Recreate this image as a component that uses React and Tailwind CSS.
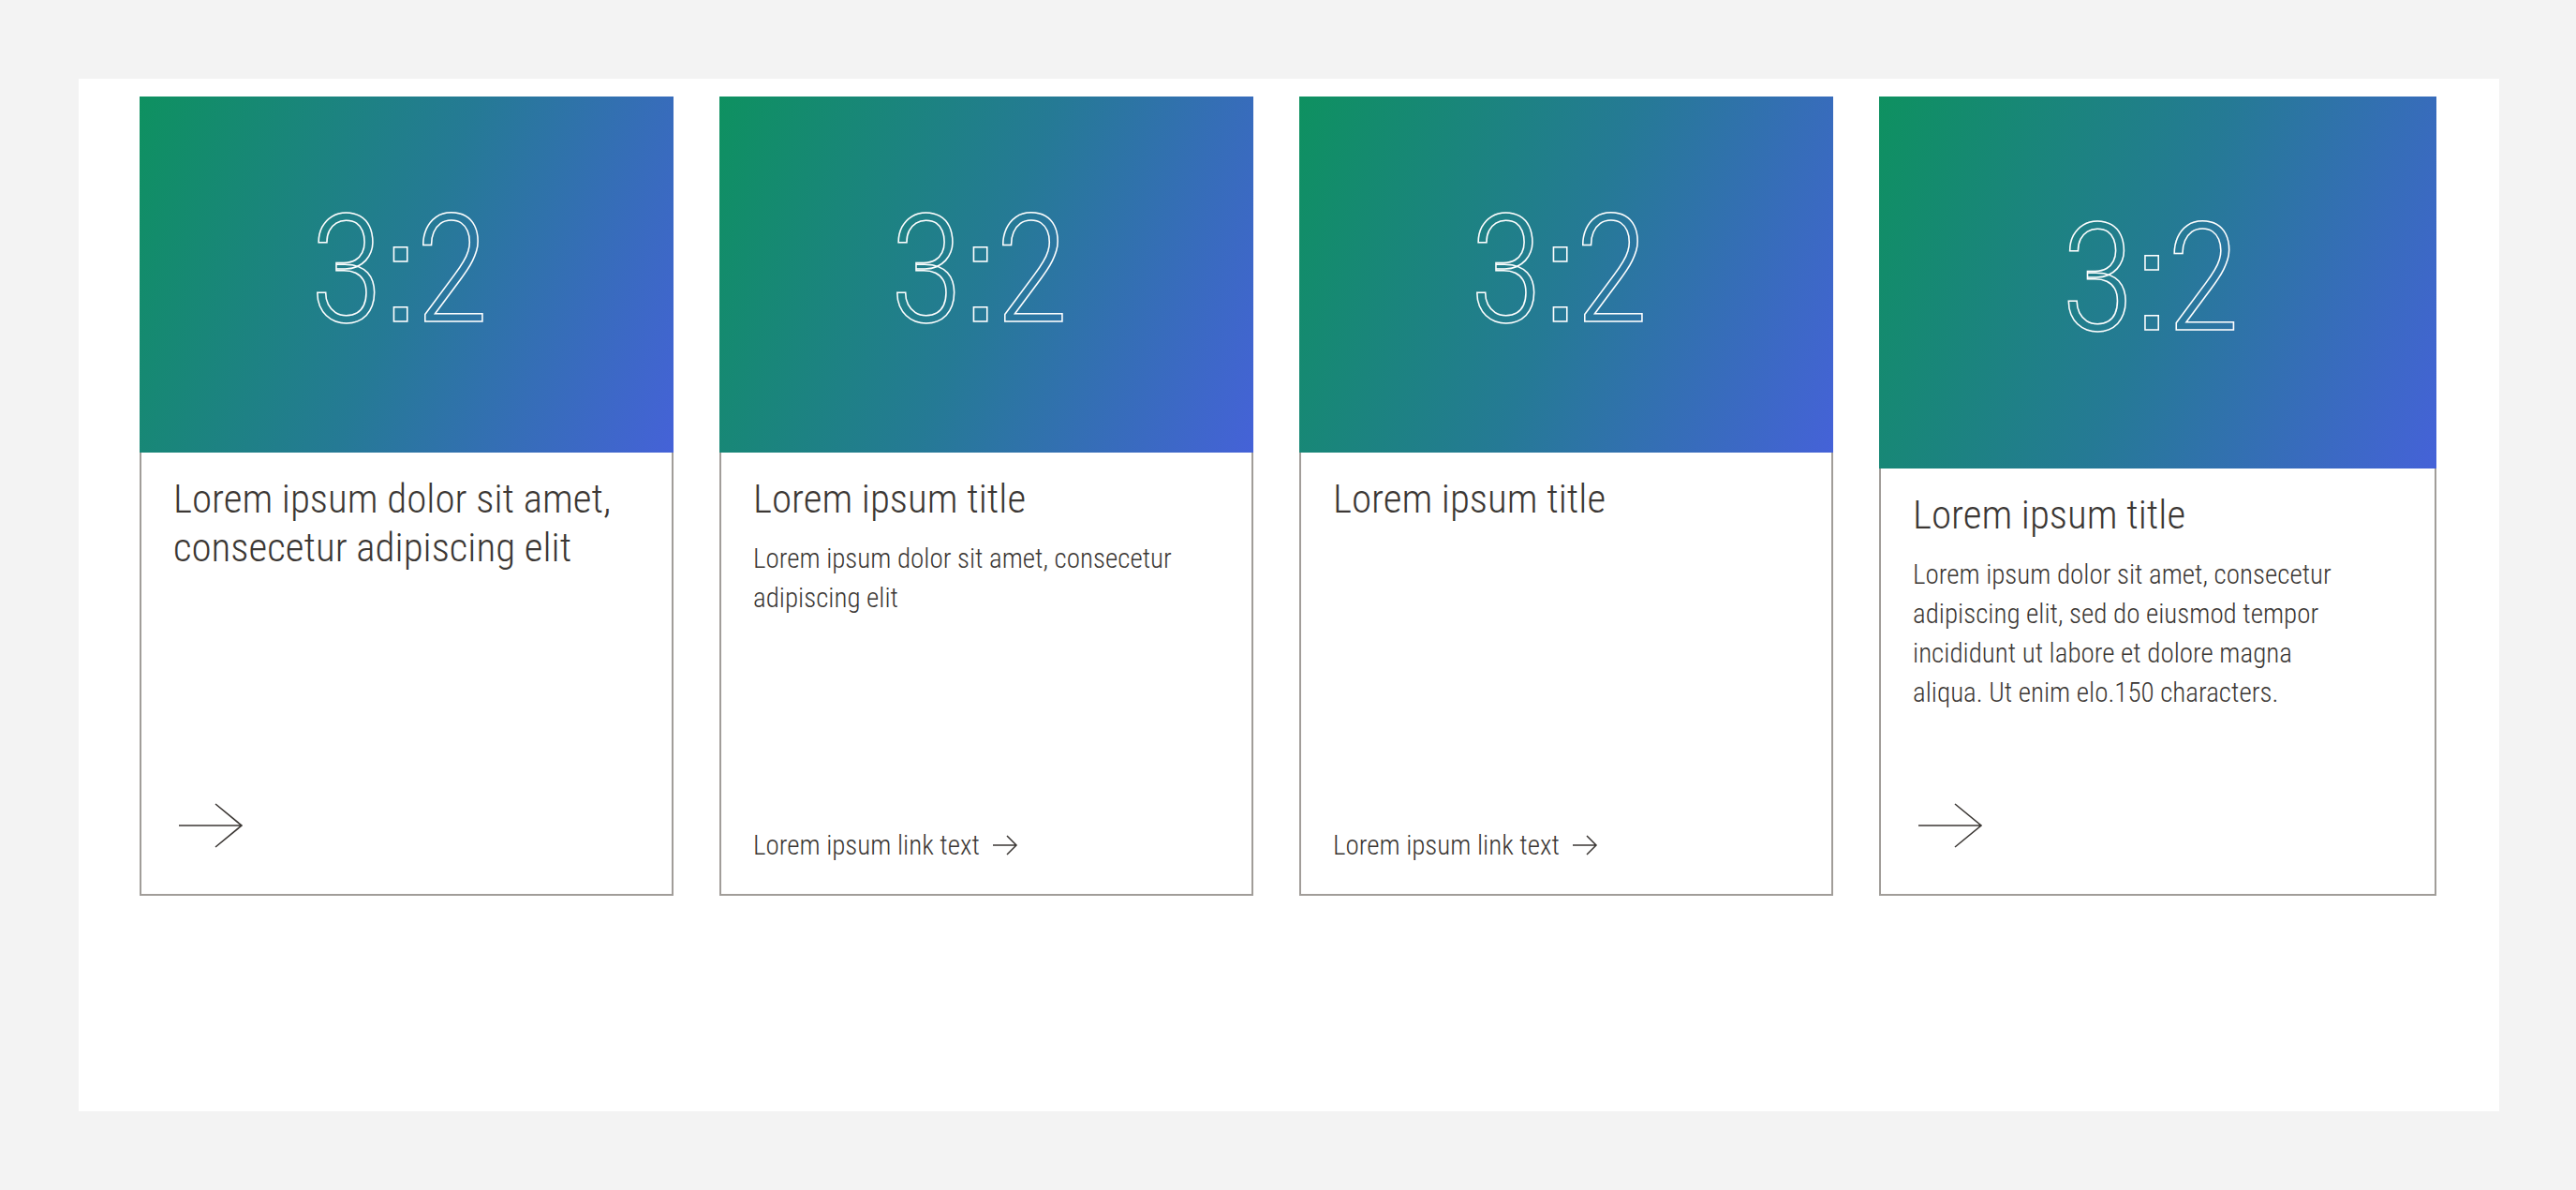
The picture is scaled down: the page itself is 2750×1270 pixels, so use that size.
import React from "react";

const font = "font-['Liberation_Sans_Narrow','Roboto_Condensed','DejaVu_Sans_Condensed','Liberation_Sans',sans-serif]";

const BigArrow = () => (
  <svg width="70" height="48" viewBox="0 0 70 48" fill="none" stroke="#3b3734" strokeWidth="1.6">
    <path d="M1 24 H68 M40 1 L68 24 L40 47" />
  </svg>
);

const SmallArrow = () => (
  <svg width="28" height="22" viewBox="0 0 28 22" fill="none" stroke="#3b3734" strokeWidth="1.5">
    <path d="M1 11 H26 M16 1 L26 11 L16 21" />
  </svg>
);

const Ratio = ({ tall }) => (
  <div
    className={`${tall ? "h-[397px]" : "h-[380px]"} bg-linear-[112deg] from-[#0e9160] via-[#257a95] to-[#4562d8] flex items-center justify-center pr-[22px] pb-[10px]`}
  >
    <span className="text-[162px] leading-none font-light text-transparent [-webkit-text-stroke:1.5px_#ffffff] tracking-[-7px]">
      3<span className="font-['Liberation_Sans',sans-serif] font-normal text-[150px] pl-[4px] pr-[2px]">:</span>2
    </span>
  </div>
);

const Card = ({ wide, title, body, link, arrow }) => (
  <div className={`${wide ? "w-[595px]" : "w-[570px]"} h-[853px] flex flex-col ${font}`}>
    <Ratio tall={wide} />
    <div className="flex-1 flex flex-col border-2 border-t-0 border-[#a19d99] pl-[34px] pr-[30px] pt-[23px] pb-[31px] text-[#3b3734]">
      <h3 className="text-[43px] leading-[52px] font-light">{title}</h3>
      {body && (
        <p className="mt-[17px] text-[29px] leading-[42px] font-[350] max-w-[480px]">{body}</p>
      )}
      <div className="mt-auto">
        {link && (
          <a href="#" className="flex items-center gap-[13px] text-[29px] leading-[42px] font-[350]">
            {link}
            <SmallArrow />
          </a>
        )}
        {arrow && (
          <div className="ml-[5px] mb-[18px]">
            <BigArrow />
          </div>
        )}
      </div>
    </div>
  </div>
);

export default function App() {
  return (
    <div className="min-h-screen bg-[#f3f3f3] pt-[84px] pl-[84px]">
      <div className="w-[2584px] h-[1102px] bg-white px-[65px] pt-[19px] flex items-start gap-[49px]">
        <Card title="Lorem ipsum dolor sit amet, consecetur adipiscing elit" arrow />
        <Card
          title="Lorem ipsum title"
          body="Lorem ipsum dolor sit amet, consecetur adipiscing elit"
          link="Lorem ipsum link text"
        />
        <Card title="Lorem ipsum title" link="Lorem ipsum link text" />
        <Card
          wide
          title="Lorem ipsum title"
          body="Lorem ipsum dolor sit amet, consecetur adipiscing elit, sed do eiusmod tempor incididunt ut labore et dolore magna aliqua. Ut enim elo.150 characters."
          arrow
        />
      </div>
    </div>
  );
}
